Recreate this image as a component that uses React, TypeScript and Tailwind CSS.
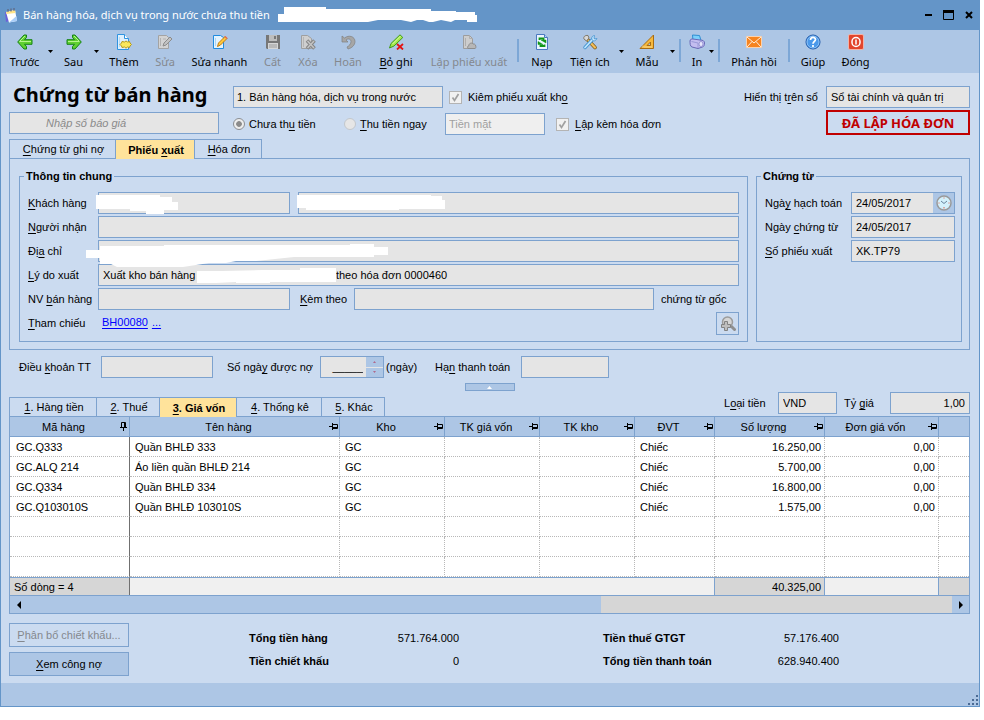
import { useState } from 'react';
import type { ReactNode } from 'react';
import clsx from 'clsx';

// "&" marks the access key, the next letter is underlined
function Label({ text }: { text: string }) {
    const i = text.indexOf('&');
    if (i < 0) return <>{text}</>;
    return (
        <>
            {text.slice(0, i)}
            <u className="underline-offset-2 [text-decoration-skip-ink:none]">{text[i + 1]}</u>
            {text.slice(i + 2)}
        </>
    );
}

const field = 'h-[22px] min-w-0 border border-[#7da2ce] bg-[#e5e5e5] px-1 outline-none appearance-none rounded-none opacity-100';

function Svg({ children }: { children: ReactNode }) {
    return (
        <svg width="16" height="16" viewBox="0 0 16 16" fill="none" aria-hidden="true">
            {children}
        </svg>
    );
}

const icons = {
    back: (
        <Svg>
            <path d="M7 1 .7 8 7 15h2.500V12.500L7.500 10.300H15V5.700H7.500L9.500 3.500V1z" fill="#5fd030" stroke="#158315" strokeLinejoin="round" />
            <path d="M2.500 7.500H14M2.500 7.500 8 2" stroke="#b6f58e" />
        </Svg>
    ),
    next: (
        <Svg>
            <path d="M9 1 15.300 8 9 15H6.500V12.500L8.500 10.300H1V5.700H8.500L6.500 3.500V1z" fill="#5fd030" stroke="#158315" strokeLinejoin="round" />
            <path d="M2 7.500h11.500M8 2l5 5" stroke="#b6f58e" />
        </Svg>
    ),
    add: (
        <Svg>
            <path d="M1.500.5h7l4 4v11h-11z" fill="#dff0fd" stroke="#2f93e0" />
            <path d="M8.500.5v4h4" fill="#fff" stroke="#2f93e0" />
            <path d="M3.500 3v10" stroke="#b5dbf7" />
            <path d="m10 7 1.500 1 2-.5.5 1.500 1.500 1.500-1.500 1.500-.5 1.500-2-.5-1.500 1.200L8.500 13l-2.500.5-.5-1.500L4 10.500 5.500 9 6 7.500l2.500.5z" fill="#fbe85c" stroke="#b79a1b" strokeLinejoin="round" />
        </Svg>
    ),
    edit: (
        <Svg>
            <path d="M1.500 1.500h8l2 2v11h-10z" fill="#d3d3d3" stroke="#a3a3a3" />
            <path d="M3.500 4v8M6 5h3" stroke="#b2b2b2" />
            <path d="m13 3 2 2-6 6-3 1 1-3z" fill="#c2c2c2" stroke="#8c8c8c" strokeLinejoin="round" />
        </Svg>
    ),
    quickEdit: (
        <Svg>
            <path d="M1.500 1.500h7l3 2v11h-10z" fill="#e3f3fe" stroke="#1f8be0" />
            <path d="M3.500 4v8" stroke="#a9d6f8" />
            <path d="m13 2.500 2 2-6.500 6.500-3 1.500 1-3.500z" fill="#ffc83a" stroke="#c07c18" strokeLinejoin="round" />
            <path d="m13 2.500 2 2" stroke="#e56a54" strokeWidth="1.500" />
        </Svg>
    ),
    save: (
        <Svg>
            <path d="M1 1h14v14H2l-1-1z" fill="#777" />
            <path d="M4 1h8v6H4z" fill="#bdbdbd" />
            <path d="M9 2h2v3H9z" fill="#777" />
            <path d="M3 9h10v6H3z" fill="#d6d6d6" />
            <path d="M4 11h8M4 13h8" stroke="#9c9c9c" />
        </Svg>
    ),
    remove: (
        <Svg>
            <path d="M1.500 1.500h6l4 3v10h-10z" fill="#cfcfcf" stroke="#9f9f9f" />
            <path d="M3.500 3v10" stroke="#b5b5b5" />
            <path d="m7 6.500 7.500 8m0-8L7 14.500" stroke="#868686" strokeWidth="3.600" />
            <path d="m7.500 7 6.500 7m0-7-6.500 7" stroke="#c4c4c4" strokeWidth="1.500" />
        </Svg>
    ),
    undo: (
        <Svg>
            <path d="M2 2v6h6L6 6c2-2 5-1 5 1.500C11 10 9 12 7 13l1 2c4-1 7-4 7-7.500 0-5-6-7-10.500-3.500z" fill="#a6a6a6" stroke="#808080" strokeWidth=".7" strokeLinejoin="round" />
        </Svg>
    ),
    unpost: (
        <Svg>
            <path d="M12 .8 14.800 3.500 6 12l-4.500 2L3 9.500z" fill="#a4e94c" stroke="#3f9a1a" strokeLinejoin="round" />
            <path d="m4.500 10 8-8" stroke="#dcfca6" />
            <path d="m9 10 6 5.500M15 10l-6 5.500" stroke="#e31414" strokeWidth="1.800" />
        </Svg>
    ),
    issue: (
        <Svg>
            <path d="M2.500 1.500h6l3 3v10h-9z" fill="#cdcdcd" stroke="#9d9d9d" />
            <path d="M8.500 1.500v3h3M4.500 4v8" stroke="#afafaf" />
            <path d="M7 14.500c-1-1 0-3 1-3-.5-2 3-3.500 4-1.500h1c2 0 2.500 4.500 1 4.500z" fill="#b7b7b7" stroke="#8d8d8d" />
        </Svg>
    ),
    reload: (
        <Svg>
            <path d="M2.500.5h8l3 3v12h-11z" fill="#eaf5ff" stroke="#4a78c0" />
            <path d="M10.500.5v3h3" fill="#b8d8f8" stroke="#4a78c0" />
            <path d="M5.500 6V4.500h4V6" stroke="#109618" strokeWidth="1.800" />
            <path d="M7 6h5v3z" fill="#109618" stroke="#109618" strokeWidth=".5" />
            <path d="M10.500 10.500V12h-4v-1.500" stroke="#109618" strokeWidth="1.800" />
            <path d="M9 10.500H4v-3z" fill="#109618" stroke="#109618" strokeWidth=".5" />
        </Svg>
    ),
    tools: (
        <Svg>
            <path d="m4.500 4.500 8.500 9" stroke="#7d5a18" strokeWidth="3.600" strokeLinecap="round" />
            <path d="m6.500 6.500 6.500 7" stroke="#f4be58" strokeWidth="2.200" strokeLinecap="round" />
            <path d="M2 5c-1-2 1-4 4-3.500L7 4 4.500 7z" fill="#d8d8d8" stroke="#807868" />
            <path d="m11 5-8 8.500" stroke="#4593cf" strokeWidth="3.400" strokeLinecap="round" />
            <path d="m11 5-8 8.500" stroke="#bfe6ff" strokeWidth="1.800" strokeLinecap="round" />
            <path d="M12.500 1.500c-2 0-3.500 2-2.500 4s3.500 2 5-1l-2.500.5-.5-1z" fill="#c6e8ff" stroke="#4593cf" strokeWidth=".8" />
        </Svg>
    ),
    ruler: (
        <Svg>
            <path d="M14.500 1v13.500H1z" fill="#f5b83d" stroke="#a96c12" strokeLinejoin="round" />
            <path d="M11.500 8v3.500H8z" fill="#adc6e5" stroke="#a96c12" />
            <path d="M4 11.500v2M6 12v2M10 12v2M12 12v2M8 12v2" stroke="#fbe0a0" strokeWidth=".8" />
        </Svg>
    ),
    print: (
        <Svg>
            <path d="m3.500 1 7 .5 1.500 5-8 .5z" fill="#7cd0fb" stroke="#2e8fd2" />
            <path d="M1 7c0-2 2-2 3-2l7 1c3 0 4.500 1 4.500 3s-.5 3.500-2 4L9 14.500 3 13c-2-.5-2-4-2-6z" fill="#c3bdf0" stroke="#6868b5" />
            <path d="M2.500 7.500 9 9v5" stroke="#9a9ad8" />
            <ellipse cx="12" cy="10" rx="2" ry="2.500" fill="#e8e6fc" stroke="#8080c4" strokeWidth=".7" />
        </Svg>
    ),
    mail: (
        <Svg>
            <path d="M.5 2.500h15v11H.5z" fill="#f68420" stroke="#fbd2ad" />
            <path d="m1 3 7 6 7-6M1 13l5-5.500M15 13l-5-5.500" stroke="#fff0e0" />
        </Svg>
    ),
    help: (
        <Svg>
            <circle cx="8" cy="8" r="7" fill="#4a98ea" stroke="#1d57a8" />
            <circle cx="8" cy="8" r="6" stroke="#a8d4fb" strokeWidth=".7" />
            <path d="M5.500 6c0-3.500 5-3.200 5-.5C10.500 7.500 8 7.500 8 9.700M8 11v2" stroke="#fff" strokeWidth="1.700" />
        </Svg>
    ),
    power: (
        <Svg>
            <rect x=".5" y=".5" width="15" height="15" rx="1.500" fill="#e2452c" stroke="#f3b2a6" />
            <rect x="4" y="3.500" width="8" height="9" rx="4" stroke="#fff" strokeWidth="1.500" />
            <path d="M8 5.500v5" stroke="#fff" strokeWidth="1.500" />
        </Svg>
    ),
};

type Tool = { label: string; icon: ReactNode; width: string; menu?: boolean; disabled?: boolean; sep?: boolean };

const tools: Tool[] = [
    { label: 'Trước', icon: icons.back, width: 'w-[47px]', menu: true },
    { label: 'Sau', icon: icons.next, width: 'w-[41px]', menu: true },
    { label: 'Thêm', icon: icons.add, width: 'w-[50px]' },
    { label: 'Sửa', icon: icons.edit, width: 'w-8', disabled: true },
    { label: 'Sửa nhanh', icon: icons.quickEdit, width: 'w-[77px]' },
    { label: 'Cất', icon: icons.save, width: 'w-[29px]', disabled: true },
    { label: 'Xóa', icon: icons.remove, width: 'w-[42px]', disabled: true },
    { label: 'Hoãn', icon: icons.undo, width: 'w-[38px]', disabled: true },
    { label: '&Bỏ ghi', icon: icons.unpost, width: 'w-[58px]' },
    { label: 'Lập phiếu xuất', icon: icons.issue, width: 'w-[88px]', disabled: true, sep: true },
    { label: 'Nạp', icon: icons.reload, width: 'w-[38px]' },
    { label: 'Tiện ích', icon: icons.tools, width: 'w-[58px]', menu: true },
    { label: 'Mẫu', icon: icons.ruler, width: 'w-[46px]', menu: true, sep: true },
    { label: 'In', icon: icons.print, width: 'w-6', menu: true, sep: true },
    { label: 'Phản hồi', icon: icons.mail, width: 'w-[60px]', sep: true },
    { label: 'Giúp', icon: icons.help, width: 'w-[38px]' },
    { label: 'Đóng', icon: icons.power, width: 'w-[47px]' },
];

function Toolbar() {
    return (
        <div className="flex h-[43px] bg-[#adc6e5] font-['Noto_Sans',sans-serif] text-[11px] leading-4">
            {tools.map((t) => (
                <div key={t.label} className="flex shrink-0">
                    <button
                        disabled={t.disabled}
                        className={clsx('flex flex-col items-center gap-1 pt-1 whitespace-nowrap', t.width, t.disabled && 'text-[#84888e]')}
                    >
                        {t.icon}
                        <span>
                            <Label text={t.label} />
                        </span>
                    </button>
                    {t.menu && (
                        <button aria-label={t.label.replace('&', '') + ' menu'} className="w-[5px]">
                            <svg width="5" height="3" viewBox="0 0 5 3" aria-hidden="true">
                                <path d="M0 0h5L2.500 3z" />
                            </svg>
                        </button>
                    )}
                    {t.sep && <span className="mx-1 mt-[9px] h-[23px] w-[2px] bg-[#7da7d6]" />}
                </div>
            ))}
        </div>
    );
}

function TitleBar() {
    return (
        <div className="flex h-[30px] items-center bg-[#6495c8] pr-[5px] pl-1">
            <svg width="14" height="15" viewBox="0 0 14 15" fill="none" aria-hidden="true">
                <path d="M0 4h2l2 9-3 1z" fill="#6b62d8" />
                <path d="m1 4 9-2 2 11-8 1.500z" fill="#fff" />
                <path d="m1 4 9-2 .5 3-9 1z" fill="#ffe489" />
                <path d="m4 14.500 8-1.500-.5-5z" fill="#a9cdf8" />
                <path d="M3 1v3M6 .5v3M9 0v3" stroke="#5d5d70" />
            </svg>
            <h2 className="ml-1 font-['Noto_Sans',sans-serif] text-[11px] leading-4 text-white">
                Bán hàng hóa, dịch vụ trong nước chưa thu tiền
            </h2>
            <svg className="ml-2 shrink-0" width="199" height="16" viewBox="0 0 199 16" fill="#fff" aria-hidden="true">
                <path d="M0 7h6V0h42v2h105v2h25v1h19v3h2v7h-10v-2h-12l-4 2-10-2-8 2h-4l-6-2h-6l-6 2-10-2H100l-10 2H0z" />
            </svg>
            <div className="ml-auto flex items-center gap-2.5">
                <button aria-label="Thu nhỏ">
                    <svg width="8" height="10" viewBox="0 0 8 10" aria-hidden="true">
                        <path d="M0 4h7v2H0z" />
                    </svg>
                </button>
                <button aria-label="Phóng to">
                    <svg width="11" height="10" viewBox="0 0 11 10" fill="none" stroke="#000" aria-hidden="true">
                        <path d="M.5.5h10v9H.5z" />
                        <path d="M0 1.500h11" strokeWidth="3" />
                    </svg>
                </button>
                <button aria-label="Đóng cửa sổ">
                    <svg width="10" height="10" viewBox="0 0 10 10" stroke="#000" strokeWidth="2" aria-hidden="true">
                        <path d="m2 2 6 6M8 2 2 8" />
                    </svg>
                </button>
            </div>
        </div>
    );
}

function Tick({ id, text }: { id: string; text: string }) {
    return (
        <span className="flex items-center gap-[6px]">
            <span className="relative flex">
                <input id={id} type="checkbox" defaultChecked className="size-[13px] appearance-none border border-[#b4b4b4] bg-[#f1f1f1]" />
                <svg className="pointer-events-none absolute inset-0" width="13" height="13" viewBox="0 0 13 13" fill="none" aria-hidden="true">
                    <path d="m3.500 6.500 2 3 4-6.500" stroke="#a0a0a0" strokeWidth="1.700" />
                </svg>
            </span>
            <label htmlFor={id}>
                <Label text={text} />
            </label>
        </span>
    );
}

function Radio({ id, text, checked }: { id: string; text: string; checked?: boolean }) {
    return (
        <span className="flex items-center gap-1">
            <input
                id={id}
                type="radio"
                name="payment"
                defaultChecked={checked}
                className="size-3 appearance-none rounded-full border border-[#c3c7cc] bg-[#e6e6e6] checked:border-[#8a8e94] checked:bg-[radial-gradient(circle,#8b8b8b_35%,#ededed_45%)]"
            />
            <label htmlFor={id}>
                <Label text={text} />
            </label>
        </span>
    );
}

function Tabs({ items, active, onChange }: { items: { text: string; width: string }[]; active: number; onChange: (i: number) => void }) {
    return (
        <div role="tablist" className="flex h-[19px] border-l border-[#7da2ce]">
            {items.map((t, i) => (
                <button
                    key={t.text}
                    role="tab"
                    aria-selected={i === active}
                    onClick={() => onChange(i)}
                    className={clsx(
                        'relative border-t border-r border-[#7da2ce] pl-[2px] text-center whitespace-nowrap',
                        t.width,
                        i === active ? '-mb-px h-5 bg-[#ffe39b] font-bold' : 'h-[19px]'
                    )}
                >
                    <Label text={t.text} />
                </button>
            ))}
        </div>
    );
}

function DocHeader() {
    return (
        <div className="flex pt-[13px]">
            <div className="w-[210px] shrink-0">
                <h1 className="h-[26px] pl-1 font-['Noto_Sans',sans-serif] text-[20px] leading-[18px] font-bold whitespace-nowrap">
                    Chứng từ bán hàng
                </h1>
                <input
                    aria-label="Số báo giá"
                    placeholder="Nhập số báo giá"
                    className={clsx(field, 'w-full pl-9 italic placeholder:text-[#8a8a8a]')}
                />
            </div>
            <div className="ml-[14px] flex flex-col gap-[5px]">
                <div className="flex items-center gap-[6px]">
                    <select aria-label="Loại chứng từ" className={clsx(field, 'w-[210px] pl-[3px]')}>
                        <option>1. Bán hàng hóa, dịch vụ trong nước</option>
                    </select>
                    <Tick id="with-issue" text="Kiêm phiếu xuất kh&o" />
                </div>
                <div className="flex items-center">
                    <span className="w-[111px]">
                        <Radio id="unpaid" text="Chưa th&u tiền" checked />
                    </span>
                    <span className="w-[101px]">
                        <Radio id="paid" text="&Thu tiền ngay" />
                    </span>
                    <select aria-label="Hình thức thu" disabled className="mr-[11px] h-[22px] w-[100px] appearance-none border border-[#7da2ce] bg-[#efefef] px-[3px] text-[#a0a0a0] opacity-100">
                        <option>Tiền mặt</option>
                    </select>
                    <Tick id="with-invoice" text="&Lập kèm hóa đơn" />
                </div>
            </div>
            <div className="ml-auto flex flex-col items-end gap-[2px]">
                <div className="flex items-center gap-2">
                    <label htmlFor="book">
                        <Label text="Hiển thị t&rên sổ" />
                    </label>
                    <select id="book" className={clsx(field, 'w-[144px]')}>
                        <option>Sổ tài chính và quản trị</option>
                    </select>
                </div>
                <div className="flex h-[25px] w-[144px] items-center justify-center border-2 border-[#c00000] font-['Noto_Sans',sans-serif] text-[13px] font-bold text-[#c00000]">
                    ĐÃ LẬP HÓA ĐƠN
                </div>
            </div>
        </div>
    );
}

function Row({ id, text, width, children }: { id: string; text: string; width: string; children: ReactNode }) {
    return (
        <div className="flex items-center">
            <label htmlFor={id} className={clsx('shrink-0', width)}>
                <Label text={text} />
            </label>
            {children}
        </div>
    );
}

function General() {
    return (
        <fieldset className="relative min-w-0 flex-1 border border-[#7da2ce] pr-2 pb-[6px] pl-2">
            <legend className="-ml-1 px-0.5 leading-4 font-bold">Thông tin chung</legend>
            <div className="flex flex-col gap-[2px] pt-2">
                <Row id="customer" text="&Khách hàng" width="w-[70px]">
                    <input id="customer" className={clsx(field, 'mr-2 w-[192px]')} />
                    <input aria-label="Tên khách hàng" className={clsx(field, 'flex-1')} />
                </Row>
                <Row id="receiver" text="&Người nhận" width="w-[70px]">
                    <input id="receiver" className={clsx(field, 'flex-1')} />
                </Row>
                <Row id="address" text="Đị&a chỉ" width="w-[70px]">
                    <input id="address" className={clsx(field, 'flex-1')} />
                </Row>
                <Row id="reason" text="&Lý do xuất" width="w-[70px]">
                    <input
                        id="reason"
                        className={clsx(field, 'flex-1')}
                        defaultValue={'Xuất kho bán hàng' + '\u00a0'.repeat(46) + 'theo hóa đơn 0000460'}
                    />
                </Row>
                <Row id="seller" text="NV &bán hàng" width="w-[70px]">
                    <input id="seller" className={clsx(field, 'w-[192px]')} />
                    <label htmlFor="attach" className="w-16 shrink-0 pl-2.5">
                        <Label text="&Kèm theo" />
                    </label>
                    <input id="attach" className={clsx(field, 'flex-1')} />
                    <span className="w-[85px] pl-[7px]">chứng từ gốc</span>
                </Row>
                <div className="flex items-start">
                    <span className="w-[74px] leading-[22px]">
                        <Label text="&Tham chiếu" />
                    </span>
                    <a href="#BH00080" className="leading-[20px] text-[#0000ff] underline underline-offset-2">
                        BH00080
                    </a>
                    <a href="#more" className="ml-1 leading-[20px] text-[#0000ff] underline underline-offset-2">
                        ...
                    </a>
                    <button aria-label="Xem tham chiếu" className="ml-auto flex size-[23px] items-center justify-center border border-[#7da2ce]">
                        <Svg>
                            <path d="m10.500 9.500 4 4" stroke="#8f8f8f" strokeWidth="3" strokeLinecap="round" />
                            <circle cx="7.500" cy="6" r="5" fill="#d5d5d5" stroke="#9b9b9b" strokeWidth="1.500" />
                            <path d="M4.500 5.500h3v3h3v3h-3v3h-3v-3h-3v-3h3z" fill="#bebebe" stroke="#828282" />
                        </Svg>
                    </button>
                </div>
            </div>
            {/* blanked out customer details */}
            <svg className="pointer-events-none absolute top-[7px] left-[66px]" width="364" height="92" viewBox="0 0 364 92" fill="#fff" aria-hidden="true">
                <path d="M10 4h64v2h12v5h6v8h-14v4H60v-3H44v-2H10z" />
                <path d="M211 4h134v1h11v4h3v9h-46v1h-93v-2h-9z" />
                <path d="M0 59h14v-4h64v-1h186v-1h24v3h14v8h-14v2h-80l-38 4h-20l-10 2h-17l-26 4H31l-6-3H14v-6H0z" />
                <path d="M111 80h25l40-1h38v-2h36v14h-66v2h-34v-2l-20 1v2h-15v-2h-4z" />
            </svg>
        </fieldset>
    );
}

function Voucher() {
    return (
        <fieldset className="w-[206px] min-w-0 shrink-0 border border-[#7da2ce] pr-[6px] pl-2">
            <legend className="-ml-1 px-0.5 leading-4 font-bold">Chứng từ</legend>
            <div className="flex flex-col gap-[2px] pt-2">
                <Row id="posted" text="Ngà&y hạch toán" width="w-[86px]">
                    <div className="flex min-w-0 flex-1">
                        <input id="posted" defaultValue="24/05/2017" className={clsx(field, 'flex-1 border-r-0')} />
                        <button aria-label="Chọn giờ" className="flex w-[22px] shrink-0 items-center justify-center border border-l-0 border-[#7da2ce] bg-[#adc6e5]">
                            <Svg>
                                <circle cx="8" cy="8" r="7" fill="#d3f1fb" stroke="#9a9a9a" strokeWidth="1.500" />
                                <path d="m5 6 3 2.500 3-2.500" stroke="#68849c" />
                                <path d="M8 2.500v1M8 12v1.500M2.500 8h1M12.500 8h1" stroke="#e5604d" />
                            </Svg>
                        </button>
                    </div>
                </Row>
                <Row id="dated" text="Ngày &chứng từ" width="w-[86px]">
                    <input id="dated" defaultValue="24/05/2017" className={clsx(field, 'flex-1')} />
                </Row>
                <Row id="number" text="&Số phiếu xuất" width="w-[86px]">
                    <input id="number" defaultValue="XK.TP79" className={clsx(field, 'flex-1')} />
                </Row>
            </div>
        </fieldset>
    );
}

function Payment() {
    return (
        <div className="mt-[6px] flex items-center pl-2.5">
            <label htmlFor="term" className="w-[82px]">
                <Label text="Điều &khoản TT" />
            </label>
            <select id="term" className={clsx(field, 'mr-[14px] w-28')}>
                <option></option>
            </select>
            <label htmlFor="days" className="w-[93px]">
                <Label text="Số ngà&y được nợ" />
            </label>
            <div className="flex h-[22px] w-16 border border-[#7da2ce] bg-[#e5e5e5]">
                <input id="days" defaultValue="_____" className="w-0 flex-1 pr-[3px] text-right outline-none" />
                <div className="flex w-[17px] flex-col gap-px">
                    <button aria-label="Tăng" className="flex flex-1 items-center justify-center bg-[#adc6e5]">
                        <svg width="3" height="2" viewBox="0 0 3 2" fill="#b06a8c" aria-hidden="true">
                            <path d="M0 2h3L1.500 0z" />
                        </svg>
                    </button>
                    <button aria-label="Giảm" className="flex flex-1 items-center justify-center bg-[#adc6e5]">
                        <svg width="3" height="2" viewBox="0 0 3 2" fill="#b06a8c" aria-hidden="true">
                            <path d="M0 0h3L1.500 2z" />
                        </svg>
                    </button>
                </div>
            </div>
            <span className="w-[51px] pl-[2px]">(ngày)</span>
            <label htmlFor="due" className="w-[86px]">
                <Label text="Hạ&n thanh toán" />
            </label>
            <input id="due" className={clsx(field, 'w-[88px]')} />
        </div>
    );
}

function Pin({ down }: { down?: boolean }) {
    return (
        <svg className={clsx('absolute top-[6px] right-[1px]', down && '-rotate-90')} width="9" height="7" viewBox="0 0 9 7" fill="none" stroke="#000" aria-hidden="true">
            <path d="M0 3.500h3M3.500 0v7M4 1.500h4.500v4H4M4 4.500h4" />
        </svg>
    );
}

const columns = [
    { title: 'Mã hàng', width: 'w-[120px]' },
    { title: 'Tên hàng', width: 'w-[210px]' },
    { title: 'Kho', width: 'w-[105px]' },
    { title: 'TK giá vốn', width: 'w-[95px]' },
    { title: 'TK kho', width: 'w-[95px]' },
    { title: 'ĐVT', width: 'w-[80px]' },
    { title: 'Số lượng', width: 'w-[110px]', right: true },
    { title: 'Đơn giá vốn', width: 'w-[114px]', right: true },
    { title: '', width: '' },
];

const rows = [
    ['GC.Q333', 'Quần BHLĐ 333', 'GC', '', '', 'Chiếc', '16.250,00', '0,00', ''],
    ['GC.ALQ 214', 'Áo liền quần BHLĐ 214', 'GC', '', '', 'Chiếc', '5.700,00', '0,00', ''],
    ['GC.Q334', 'Quần BHLĐ 334', 'GC', '', '', 'Chiếc', '16.800,00', '0,00', ''],
    ['GC.Q103010S', 'Quần BHLĐ 103010S', 'GC', '', '', 'Chiếc', '1.575,00', '0,00', ''],
    ['', '', '', '', '', '', '', '', ''],
    ['', '', '', '', '', '', '', '', ''],
    ['', '', '', '', '', '', '', '', ''],
];

function ItemGrid() {
    const last = columns.length - 1;
    return (
        <div className="border border-[#7da2ce] bg-white">
            <table className="w-full table-fixed border-separate border-spacing-0">
                <thead>
                    <tr className="h-5 bg-[#adc6e5]">
                        {columns.map((c, i) => (
                            <th key={i} className={clsx('relative border-b border-[#7da2ce] py-0 pr-3 pl-0 font-normal', c.width, i < last && 'border-r')}>
                                {c.title}
                                {c.title && <Pin down={i === 0} />}
                            </th>
                        ))}
                    </tr>
                </thead>
                <tbody>
                    {rows.map((r, n) => (
                        <tr key={n} className="h-5">
                            {r.map((v, i) => (
                                <td
                                    key={i}
                                    className={clsx(
                                        'border-b border-b-[#b8b8b8] [border-bottom-style:dotted] py-0',
                                        i === 0 && 'border-r border-r-[#707070] [border-right-style:solid]',
                                        i > 0 && i < last && 'border-r border-r-[#b8b8b8] [border-right-style:dotted]',
                                        columns[i].right ? 'pr-[3px] text-right' : i === 0 ? 'pl-[6px]' : 'pl-[5px]'
                                    )}
                                >
                                    {v}
                                </td>
                            ))}
                        </tr>
                    ))}
                </tbody>
                <tfoot>
                    <tr className="h-[18px]">
                        <td className="border-t border-r border-t-[#7da2ce] border-r-[#707070] bg-[#d6d6d6] py-0 pl-1">Số dòng = 4</td>
                        <td colSpan={5} className="border-t border-r border-[#7da2ce] bg-[#f0f0f0]"></td>
                        <td className="border-t border-r border-[#7da2ce] bg-[#d6d6d6] py-0 pr-[3px] text-right">40.325,00</td>
                        <td className="border-t border-r border-[#7da2ce] bg-[#f0f0f0]"></td>
                        <td className="border-t border-[#7da2ce] bg-[#d6d6d6]"></td>
                    </tr>
                </tfoot>
            </table>
            <div className="flex h-[18px] border-t border-[#7da2ce] bg-[#d6d6d6]">
                <button aria-label="Cuộn trái" className="flex w-[17px] items-center justify-center bg-[#adc6e5]">
                    <svg width="4" height="8" viewBox="0 0 4 8" aria-hidden="true">
                        <path d="M4 0v8L0 4z" />
                    </svg>
                </button>
                <div className="flex-1">
                    <div className="h-full w-[62%] bg-[#adc6e5]" />
                </div>
                <button aria-label="Cuộn phải" className="flex w-[17px] items-center justify-center bg-[#adc6e5]">
                    <svg width="4" height="8" viewBox="0 0 4 8" aria-hidden="true">
                        <path d="M0 0v8l4-4z" />
                    </svg>
                </button>
            </div>
        </div>
    );
}

function Total({ label, value }: { label: string; value: string }) {
    return (
        <div className="flex justify-between">
            <dt className="font-bold">{label}</dt>
            <dd>{value}</dd>
        </div>
    );
}

export default function App() {
    const [docTab, setDocTab] = useState(1);
    const [gridTab, setGridTab] = useState(2);

    return (
        <div className="min-h-screen bg-white pr-1 font-['Liberation_Sans',Arial,sans-serif] text-[11px] leading-4 text-black">
            <div className="border-x border-b border-[#6495c8] bg-[#cbdbf0]">
                <TitleBar />
                <Toolbar />
                <main className="pr-[9px] pl-2">
                    <DocHeader />

                    <div className="mt-1">
                        <Tabs
                            active={docTab}
                            onChange={setDocTab}
                            items={[
                                { text: '&Chứng từ ghi nợ', width: 'w-[106px]' },
                                { text: 'Phiếu &xuất', width: 'w-[79px]' },
                                { text: '&Hóa đơn', width: 'w-[67px]' },
                            ]}
                        />
                    </div>
                    <div className="flex gap-2 border border-[#7da2ce] pt-[9px] pr-[7px] pb-[7px] pl-[9px]">
                        <General />
                        <Voucher />
                    </div>

                    <Payment />
                    <button aria-label="Thu gọn" className="mx-auto mt-[5px] flex h-2 w-[50px] items-center justify-center border border-[#7da2ce] bg-[#adc6e5]">
                        <svg width="5" height="3" viewBox="0 0 5 3" fill="#fff" aria-hidden="true">
                            <path d="M0 3h5L2.500 0z" />
                        </svg>
                    </button>

                    <div className="mt-px flex h-6 items-end justify-between">
                        <Tabs
                            active={gridTab}
                            onChange={setGridTab}
                            items={[
                                { text: '&1. Hàng tiền', width: 'w-[87px]' },
                                { text: '&2. Thuế', width: 'w-[63px]' },
                                { text: '&3. Giá vốn', width: 'w-[77px]' },
                                { text: '&4. Thống kê', width: 'w-[85px]' },
                                { text: '&5. Khác', width: 'w-[63px]' },
                            ]}
                        />
                        <div className="flex items-center self-start">
                            <label htmlFor="currency" className="w-[54px]">
                                <Label text="L&oại tiền" />
                            </label>
                            <select id="currency" className={clsx(field, 'w-[59px]')}>
                                <option>VND</option>
                            </select>
                            <label htmlFor="rate" className="w-[53px] pl-[7px]">
                                <Label text="Tỷ &giá" />
                            </label>
                            <input id="rate" defaultValue="1,00" className={clsx(field, 'w-20 text-right')} />
                        </div>
                    </div>
                    <ItemGrid />

                    <div className="flex pt-[9px] pb-[7px]">
                        <div className="flex w-[120px] flex-col gap-[5px]">
                            <button disabled className="h-6 border border-[#7da2ce] text-[#84888e]">
                                <Label text="&Phân bổ chiết khấu..." />
                            </button>
                            <button className="h-6 border border-[#7da2ce] bg-[#adc6e5]">
                                <Label text="&Xem công nợ" />
                            </button>
                        </div>
                        <dl className="ml-[120px] flex w-[210px] flex-col gap-[7px] pt-[7px]">
                            <Total label="Tổng tiền hàng" value="571.764.000" />
                            <Total label="Tiền chiết khấu" value="0" />
                        </dl>
                        <dl className="ml-36 flex w-[236px] flex-col gap-[7px] pt-[7px]">
                            <Total label="Tiền thuế GTGT" value="57.176.400" />
                            <Total label="Tổng tiền thanh toán" value="628.940.400" />
                        </dl>
                    </div>
                </main>
                <footer className="flex h-[23px] items-end justify-end bg-[#adc6e5]">
                    <svg width="11" height="11" viewBox="0 0 11 11" fill="#4a6a94" aria-hidden="true">
                        <path d="M8 0h2v2H8zM4 4h2v2H4zM8 4h2v2H8zM0 8h2v2H0zM4 8h2v2H4zM8 8h2v2H8z" />
                    </svg>
                </footer>
            </div>
        </div>
    );
}
